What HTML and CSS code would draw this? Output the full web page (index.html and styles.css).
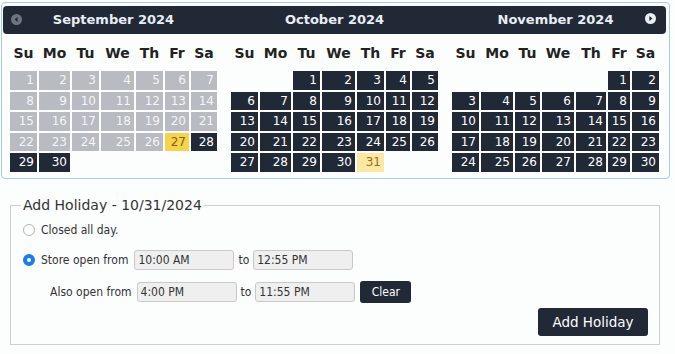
FILE: index.html
```html
<!DOCTYPE html>
<html>
<head>
<meta charset="utf-8">
<link rel="stylesheet" href="styles.css">
</head>
<body>
<div class="page">
  <div class="datepicker">
    <div class="month month--first">
      <div class="month-head">
        <span class="nav nav--prev"><svg viewBox="0 0 11 11" width="11" height="11"><circle cx="5.5" cy="5.5" r="5.5" fill="#6d7580"/><polygon points="6.6,2.9 3.6,5.5 6.6,8.1" fill="#212937"/></svg></span>
        <span class="month-title">September 2024</span>
      </div>
      <div class="days">
        <span class="dow">Su</span><span class="dow">Mo</span><span class="dow">Tu</span><span class="dow">We</span><span class="dow">Th</span><span class="dow">Fr</span><span class="dow">Sa</span>
        <span class="day day--past">1</span><span class="day day--past">2</span><span class="day day--past">3</span><span class="day day--past">4</span><span class="day day--past">5</span><span class="day day--past">6</span><span class="day day--past">7</span>
        <span class="day day--past">8</span><span class="day day--past">9</span><span class="day day--past">10</span><span class="day day--past">11</span><span class="day day--past">12</span><span class="day day--past">13</span><span class="day day--past">14</span>
        <span class="day day--past">15</span><span class="day day--past">16</span><span class="day day--past">17</span><span class="day day--past">18</span><span class="day day--past">19</span><span class="day day--past">20</span><span class="day day--past">21</span>
        <span class="day day--past">22</span><span class="day day--past">23</span><span class="day day--past">24</span><span class="day day--past">25</span><span class="day day--past">26</span><span class="day day--today">27</span><span class="day">28</span>
        <span class="day">29</span><span class="day">30</span>
      </div>
    </div>
    <div class="month">
      <div class="month-head">
        <span class="month-title">October 2024</span>
      </div>
      <div class="days">
        <span class="dow">Su</span><span class="dow">Mo</span><span class="dow">Tu</span><span class="dow">We</span><span class="dow">Th</span><span class="dow">Fr</span><span class="dow">Sa</span>
        <span class="blank"></span><span class="blank"></span><span class="day">1</span><span class="day">2</span><span class="day">3</span><span class="day">4</span><span class="day">5</span>
        <span class="day">6</span><span class="day">7</span><span class="day">8</span><span class="day">9</span><span class="day">10</span><span class="day">11</span><span class="day">12</span>
        <span class="day">13</span><span class="day">14</span><span class="day">15</span><span class="day">16</span><span class="day">17</span><span class="day">18</span><span class="day">19</span>
        <span class="day">20</span><span class="day">21</span><span class="day">22</span><span class="day">23</span><span class="day">24</span><span class="day">25</span><span class="day">26</span>
        <span class="day">27</span><span class="day">28</span><span class="day">29</span><span class="day">30</span><span class="day day--selected">31</span>
      </div>
    </div>
    <div class="month month--last">
      <div class="month-head">
        <span class="month-title">November 2024</span>
        <span class="nav nav--next"><svg viewBox="0 0 11 11" width="11" height="11"><circle cx="5.5" cy="5.5" r="5.5" fill="#e9eef3"/><polygon points="4.4,2.9 7.4,5.5 4.4,8.1" fill="#212937"/></svg></span>
      </div>
      <div class="days">
        <span class="dow">Su</span><span class="dow">Mo</span><span class="dow">Tu</span><span class="dow">We</span><span class="dow">Th</span><span class="dow">Fr</span><span class="dow">Sa</span>
        <span class="blank"></span><span class="blank"></span><span class="blank"></span><span class="blank"></span><span class="blank"></span><span class="day">1</span><span class="day">2</span>
        <span class="day">3</span><span class="day">4</span><span class="day">5</span><span class="day">6</span><span class="day">7</span><span class="day">8</span><span class="day">9</span>
        <span class="day">10</span><span class="day">11</span><span class="day">12</span><span class="day">13</span><span class="day">14</span><span class="day">15</span><span class="day">16</span>
        <span class="day">17</span><span class="day">18</span><span class="day">19</span><span class="day">20</span><span class="day">21</span><span class="day">22</span><span class="day">23</span>
        <span class="day">24</span><span class="day">25</span><span class="day">26</span><span class="day">27</span><span class="day">28</span><span class="day">29</span><span class="day">30</span>
      </div>
    </div>
  </div>

  <fieldset class="holiday">
    <legend class="holiday-legend">Add Holiday - 10/31/2024</legend>
    <div class="holiday-body">
      <label class="row row--closed"><input type="radio" name="mode" class="radio"><span class="label-text">Closed all day.</span></label>
      <div class="row row--open">
        <label class="radio-label"><input type="radio" name="mode" class="radio" checked><span class="label-text">Store open from</span></label>
        <input type="text" class="time" value="10:00 AM">
        <span class="to">to</span>
        <input type="text" class="time" value="12:55 PM">
      </div>
      <div class="row row--also">
        <span class="label-text">Also open from</span>
        <input type="text" class="time" value="4:00 PM">
        <span class="to">to</span>
        <input type="text" class="time" value="11:55 PM">
        <button type="button" class="btn btn--sm">Clear</button>
      </div>
      <div class="actions">
        <button type="button" class="btn btn--lg">Add Holiday</button>
      </div>
    </div>
  </fieldset>
</div>
</body>
</html>
```

FILE: styles.css
```css
html, body {
  margin: 0;
  background: #fcfdfd;
}

body {
  font-family: "DejaVu Sans", Verdana, sans-serif;
  color: #333;
}

.page {
  padding: 2px 0 0 1px;
}

/* ---------- Datepicker ---------- */
.datepicker {
  display: flex;
  width: 663px;
  padding: 3px 3px 6px 1px;
  border: 1px solid #a8cbe3;
  border-radius: 4px;
  background: #fcfdfd;
}

.month {
  flex: 0 0 221px;
}

.month-head {
  position: relative;
  height: 28px;
  background: #212937;
  color: #e8eef4;
  font-weight: bold;
  font-size: 13px;
  line-height: 28px;
  text-align: center;
}

.month--first .month-head {
  border-radius: 4px 0 0 4px;
}

.month--last .month-head {
  border-radius: 0 4px 4px 0;
}

.nav {
  position: absolute;
  width: 11px;
  height: 11px;
  line-height: 0;
}

.nav--prev {
  top: 8px;
  left: 8px;
}

.nav--next {
  top: 7px;
  right: 10px;
}

.days {
  display: grid;
  justify-content: center;
  grid-template-columns: 27px 31px 27px 33px 27px 24px 26px;
  grid-template-rows: 35px;
  grid-auto-rows: 18.6px;
  gap: 2px;
}

.month--last .days {
  grid-template-columns: 27px 32px 25px 32px 30px 22px 27px;
}

.dow {
  display: flex;
  align-items: center;
  justify-content: center;
  padding-top: 2px;
  font-size: 14px;
  font-weight: bold;
  color: #222;
}

.day {
  background: #212937;
  color: #fff;
  font-size: 12px;
  line-height: 18.6px;
  text-align: right;
  padding-right: 3px;
}

.day--past {
  background: #b8bbc1;
  color: #f4f5f6;
}

.day--today {
  background: #f5d44c;
  color: #8c5c0c;
}

.day--selected {
  background: #fbe9a3;
  color: #a16a1a;
}

/* ---------- Holiday form ---------- */
.holiday {
  box-sizing: border-box;
  width: 650px;
  margin: 18px 0 0 9px;
  padding: 0 11px 8px 12px;
  border: 1px solid #cfcfcf;
  min-width: 0;
}

.holiday-legend {
  padding: 0 2px;
  margin-left: -2px;
  font-size: 14px;
  line-height: 17px;
  color: #333;
}

.holiday-body {
  display: flex;
  flex-direction: column;
  font-family: "DejaVu Sans Condensed", "DejaVu Sans", sans-serif;
  font-stretch: condensed;
  font-size: 12px;
  color: #333;
}

.row {
  display: flex;
  align-items: center;
}

.row--closed {
  height: 16px;
  margin-top: 8px;
}

.row--open {
  height: 20px;
  margin-top: 12px;
}

.row--also {
  height: 22px;
  margin-top: 11px;
  padding-left: 27px;
}

.radio-label {
  display: flex;
  align-items: center;
  padding-right: 1px;
}

.radio {
  appearance: none;
  -webkit-appearance: none;
  box-sizing: border-box;
  width: 12px;
  height: 12px;
  margin: 0 6px 0 0;
  border: 1px solid #b3b3b3;
  border-radius: 50%;
  background: #fff;
}

.radio:checked {
  border: 4px solid #1b7cf2;
  background: #fff;
}

.time {
  box-sizing: border-box;
  width: 100px;
  height: 20px;
  margin: 0 0 0 5px;
  padding: 0 3px;
  border: 1px solid #c9c9c9;
  border-radius: 3px;
  background: #efefef;
  font-family: inherit;
  font-stretch: inherit;
  font-size: 12px;
  color: #333;
}

.to {
  margin: 0 -1px 0 4px;
}

.btn {
  border: 0;
  border-radius: 3px;
  background: #212937;
  color: #fff;
  padding: 0;
}

.btn--sm {
  width: 51px;
  height: 22px;
  margin-left: 5px;
  font-family: inherit;
  font-stretch: inherit;
  font-size: 12px;
}

.actions {
  display: flex;
  justify-content: flex-end;
  margin-top: 5px;
}

.btn--lg {
  width: 110px;
  height: 28px;
  font-family: "DejaVu Sans", sans-serif;
  font-size: 13.5px;
}
```
